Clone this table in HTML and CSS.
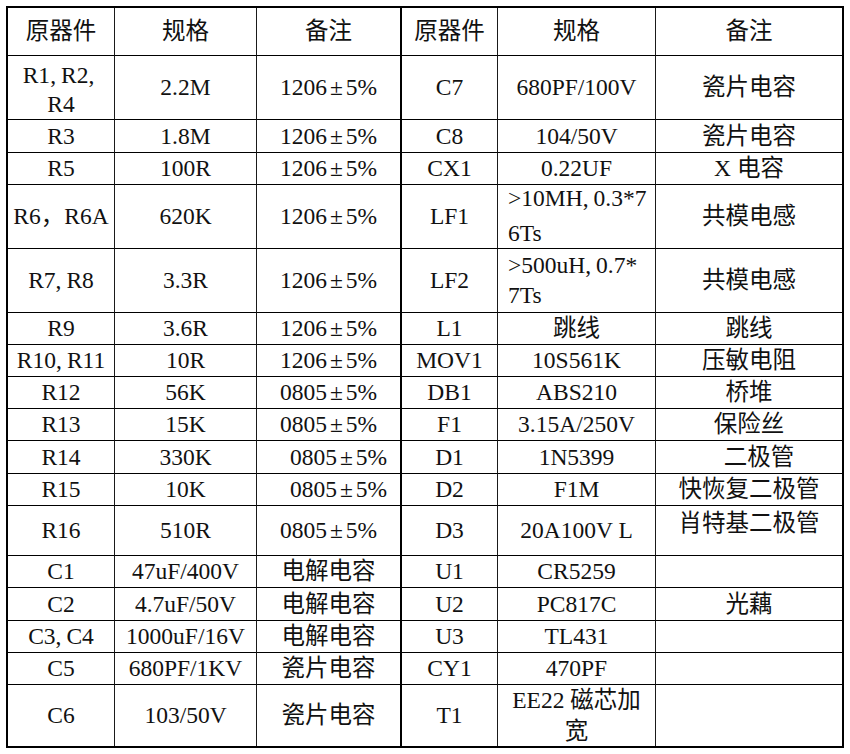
FILE: index.html
```html
<!DOCTYPE html>
<html lang="zh-CN">
<head>
<meta charset="utf-8">
<title>BOM</title>
<link rel="stylesheet" href="styles.css">
</head>
<body>
<table class="bom">
  <tr class="h48">
    <td class="c1">原器件</td><td class="c2">规格</td><td class="c3">备注</td>
    <td class="c4">原器件</td><td class="c5">规格</td><td class="c6">备注</td>
  </tr>
  <tr class="h64">
    <td class="r1">R1<span class="cm">,</span>R2<span class="cm">,</span><br>R4</td><td>2.2M</td><td class="mid">1206<span class="pm">±</span>5%</td>
    <td>C7</td><td>680PF/100V</td><td>瓷片电容</td>
  </tr>
  <tr class="h33">
    <td>R3</td><td>1.8M</td><td class="mid">1206<span class="pm">±</span>5%</td>
    <td>C8</td><td>104/50V</td><td>瓷片电容</td>
  </tr>
  <tr class="h32">
    <td>R5</td><td>100R</td><td class="mid">1206<span class="pm">±</span>5%</td>
    <td>CX1</td><td>0.22UF</td><td>X 电容</td>
  </tr>
  <tr class="h63">
    <td>R6，R6A</td><td>620K</td><td class="mid">1206<span class="pm">±</span>5%</td>
    <td>LF1</td><td class="left"><div class="lf1">&gt;10MH<span class="cm">,</span>0.3*7<br>6Ts</div></td><td>共模电感</td>
  </tr>
  <tr class="h64">
    <td>R7<span class="cm">,</span>R8</td><td>3.3R</td><td class="mid">1206<span class="pm">±</span>5%</td>
    <td>LF2</td><td class="left"><div class="lf2">&gt;500uH<span class="cm">,</span>0.7*<br>7Ts</div></td><td>共模电感</td>
  </tr>
  <tr class="h32">
    <td>R9</td><td>3.6R</td><td class="mid">1206<span class="pm">±</span>5%</td>
    <td>L1</td><td>跳线</td><td>跳线</td>
  </tr>
  <tr class="h32">
    <td>R10<span class="cm">,</span>R11</td><td>10R</td><td class="mid">1206<span class="pm">±</span>5%</td>
    <td>MOV1</td><td>10S561K</td><td>压敏电阻</td>
  </tr>
  <tr class="h32">
    <td>R12</td><td>56K</td><td class="mid">0805<span class="pm">±</span>5%</td>
    <td>DB1</td><td>ABS210</td><td>桥堆</td>
  </tr>
  <tr class="h32">
    <td>R13</td><td>15K</td><td class="mid">0805<span class="pm">±</span>5%</td>
    <td>F1</td><td>3.15A/250V</td><td>保险丝</td>
  </tr>
  <tr class="h33">
    <td>R14</td><td>330K</td><td class="mid shift">0805<span class="pm">±</span>5%</td>
    <td>D1</td><td>1N5399</td><td class="shift">二极管</td>
  </tr>
  <tr class="h32">
    <td>R15</td><td>10K</td><td class="mid shift">0805<span class="pm">±</span>5%</td>
    <td>D2</td><td>F1M</td><td>快恢复二极管</td>
  </tr>
  <tr class="h50">
    <td>R16</td><td>510R</td><td class="mid">0805<span class="pm">±</span>5%</td>
    <td>D3</td><td>20A100V L</td><td class="top">肖特基二极管</td>
  </tr>
  <tr class="h32">
    <td>C1</td><td>47uF/400V</td><td class="mid">电解电容</td>
    <td>U1</td><td>CR5259</td><td></td>
  </tr>
  <tr class="h33">
    <td>C2</td><td>4.7uF/50V</td><td class="mid">电解电容</td>
    <td>U2</td><td>PC817C</td><td>光藕</td>
  </tr>
  <tr class="h32">
    <td>C3<span class="cm">,</span>C4</td><td>1000uF/16V</td><td class="mid">电解电容</td>
    <td>U3</td><td>TL431</td><td></td>
  </tr>
  <tr class="h32">
    <td>C5</td><td>680PF/1KV</td><td class="mid">瓷片电容</td>
    <td>CY1</td><td>470PF</td><td></td>
  </tr>
  <tr class="h61 last">
    <td>C6</td><td>103/50V</td><td class="mid">瓷片电容</td>
    <td>T1</td><td><div class="t1">EE22 磁芯加<br>宽</div></td><td></td>
  </tr>
</table>
</body>
</html>
```

FILE: styles.css
```css
html, body {
  margin: 0;
  padding: 0;
  background: #ffffff;
}

body {
  padding: 6px 0 0 6px;
}

.bom {
  border-collapse: separate;
  border-spacing: 0;
  table-layout: fixed;
  width: 838px;
  border: 2px solid #000;
  font-family: "Liberation Serif", "Noto Sans CJK SC", serif;
  font-size: 23.5px;
  line-height: 29px;
  color: #111;
}

.bom td {
  box-sizing: border-box;
  padding: 0;
  text-align: center;
  vertical-align: middle;
  white-space: nowrap;
  border-right: 1px solid #1a1a1a;
  border-bottom: 1px solid #000;
  overflow: visible;
}

.bom td:last-child {
  border-right: none;
}

.bom tr.last td {
  border-bottom: none;
}

.bom td.mid,
.bom td.c3 {
  border-right: 2px solid #000;
}

.c1 { width: 107px; }
.c2 { width: 142px; }
.c3 { width: 145px; }
.c4 { width: 96px; }
.c5 { width: 158px; }
.c6 { width: 186px; }

.h48 { height: 48px; }
.h64 { height: 64px; }
.h33 { height: 33px; }
.h32 { height: 32px; }
.h63 { height: 63px; }
.h50 { height: 50px; }
.h61 { height: 61px; }

.pm {
  margin: 0 3px;
}

.cm {
  margin-right: 5px;
}

.shift {
  padding-left: 20px !important;
}

.r1 {
  vertical-align: top !important;
  padding-top: 5px !important;
}

.bom td.left {
  text-align: left;
  padding-left: 10px;
  vertical-align: top;
}

.lf1 {
  line-height: 35px;
  margin: -4px 0 -3px 0;
}

.lf2 {
  line-height: 30px;
  margin-top: 1px;
}

.t1 {
  line-height: 31px;
  margin: 0 0 -1px 0;
}

.bom td.top {
  vertical-align: top;
  padding-top: 3px;
}
```
